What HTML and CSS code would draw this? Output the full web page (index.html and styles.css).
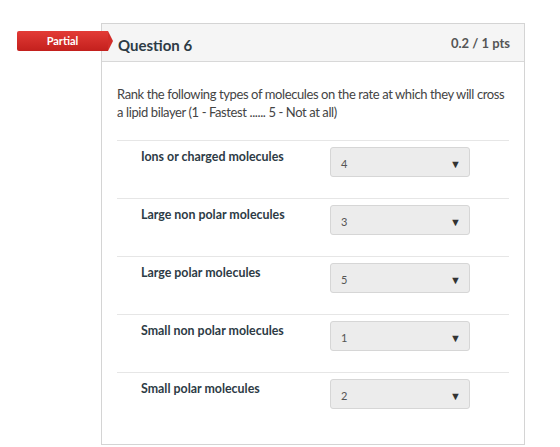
FILE: index.html
```html
<!DOCTYPE html>
<html lang="en">
<head>
    <meta charset="UTF-8">
    <title>Question 6</title>
    <link rel="stylesheet" href="styles.css">
</head>
<body>

<div class="question">
    <div class="badge">Partial</div>

    <!-- Question header -->
    <div class="question-header">
        <span class="question-name">Question 6</span>
        <span class="question-points">0.2 / 1 pts</span>
    </div>

    <div class="question-body">
        <p class="question-text">Rank the following types of molecules on the rate at which they will cross a lipid bilayer (1 - Fastest ...... 5 - Not at all)</p>

        <div class="answer-row">
            <div class="answer-label">Ions or charged molecules</div>
            <div class="answer-select"><span>4</span><span class="arrow">&#9660;</span></div>
        </div>
        <div class="answer-row">
            <div class="answer-label">Large non polar molecules</div>
            <div class="answer-select"><span>3</span><span class="arrow">&#9660;</span></div>
        </div>
        <div class="answer-row">
            <div class="answer-label">Large polar molecules</div>
            <div class="answer-select"><span>5</span><span class="arrow">&#9660;</span></div>
        </div>
        <div class="answer-row">
            <div class="answer-label">Small non polar molecules</div>
            <div class="answer-select"><span>1</span><span class="arrow">&#9660;</span></div>
        </div>
        <div class="answer-row">
            <div class="answer-label">Small polar molecules</div>
            <div class="answer-select"><span>2</span><span class="arrow">&#9660;</span></div>
        </div>
    </div>
</div>

</body>
</html>
```

FILE: styles.css
```css
body {
    font-family: Lato, "Open Sans", sans-serif;
    background-color: #fff;
    color: #2d3b45;
    margin: 0;
    padding: 23px 0 0 101px;
}
.question {
    position: relative;
    width: 422px;
    height: 420px;
    border: 1px solid #d4d4d4;
}
.badge {
    position: absolute;
    left: -85px;
    top: 7px;
    width: 91px;
    height: 20px;
    line-height: 20px;
    background: linear-gradient(#e33b36, #c3201d);
    color: #fff;
    font-size: 11px;
    font-weight: bold;
    text-align: center;
    border-radius: 2px 0 0 2px;
}
.badge::after {
    content: "";
    position: absolute;
    right: -5px;
    top: 0;
    border-top: 10px solid transparent;
    border-bottom: 10px solid transparent;
    border-left: 5px solid #d22d29;
}
.question-header {
    display: flex;
    justify-content: space-between;
    align-items: center;
    height: 37px;
    padding: 0 14px 0 16px;
    background-color: #f5f5f5;
    border-bottom: 1px solid #d8d8d8;
}
.question-name {
    font-size: 15px;
    font-weight: bold;
    padding-top: 5px;
}
.question-points {
    font-size: 13px;
    font-weight: bold;
    color: #555;
}
.question-body {
    padding: 23px 15px 0 15px;
}
.question-text {
    font-size: 13px;
    line-height: 18px;
    letter-spacing: -0.4px;
    color: #444;
    margin: 0 0 19px 0;
}
.answer-row {
    display: flex;
    height: 57px;
    border-top: 1px solid #e6e6e6;
}
.answer-label {
    width: 189px;
    padding: 8px 0 0 24px;
    font-size: 12.4px;
    font-weight: bold;
    line-height: 16px;
}
.answer-select {
    display: flex;
    justify-content: space-between;
    align-items: center;
    box-sizing: border-box;
    width: 140px;
    height: 30px;
    margin-top: 6px;
    padding: 2px 8px 0 10px;
    background-color: #ececec;
    border: 1px solid #d6d6d6;
    border-radius: 3px;
    font-size: 11px;
    color: #555;
}
.arrow {
    font-size: 11px;
    color: #333;
}
```
